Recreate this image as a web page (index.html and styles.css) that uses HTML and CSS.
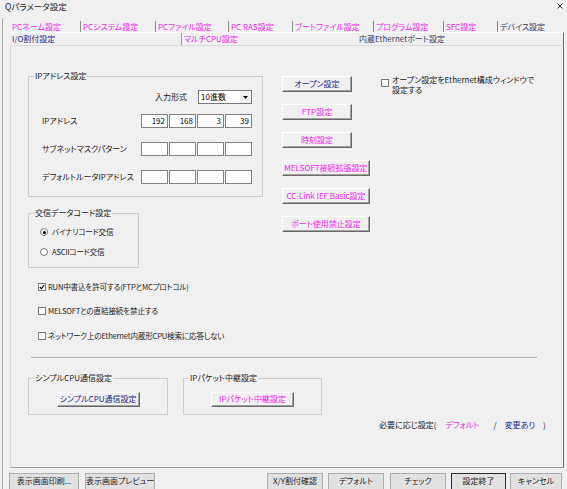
FILE: index.html
```
<!DOCTYPE html>
<html lang="ja">
<head>
<meta charset="utf-8">
<title>Qパラメータ設定</title>
<link rel="stylesheet" href="styles.css">
</head>
<body>
<div class="window">
  <div class="titlebar">
    <span class="title">Qパラメータ設定</span>
    <svg class="close" viewBox="0 0 6 6" width="6" height="6"><path d="M0.5 0.5L5.5 5.5M5.5 0.5L0.5 5.5" stroke="#222" stroke-width="0.9"/></svg>
  </div>
  <div class="frame">
    <div class="tabrow row1">
      <div class="tab tw1 mag">PCネーム設定</div>
      <div class="tab tw2 mag">PCシステム設定</div>
      <div class="tab tw3 mag">PCファイル設定</div>
      <div class="tab tw4 mag">PC RAS設定</div>
      <div class="tab tw5 mag">ブートファイル設定</div>
      <div class="tab tw6 mag">プログラム設定</div>
      <div class="tab tw7 mag">SFC設定</div>
      <div class="tab tw8 dark">デバイス設定</div>
    </div>
    <div class="tabrow row2">
      <div class="tab tr1 navy">I/O割付設定</div>
      <div class="tab tr2 mag">マルチCPU設定</div>
      <div class="tab tr3 dark">内蔵Ethernetポート設定</div>
    </div>
    <div class="panel">
      <div class="top">
        <div class="leftcol">
          <div class="group ip">
            <span class="legend">IPアドレス設定</span>
            <div class="fmt">
              <span class="fmt-label">入力形式</span>
              <div class="select">
                <span class="sel-text">10進数</span>
                <span class="sel-btn"><svg viewBox="0 0 5 3" width="5" height="3"><polygon points="0,0 5,0 2.5,3" fill="#000"/></svg></span>
              </div>
            </div>
            <div class="iprow">
              <span class="iplabel">IPアドレス</span>
              <div class="octets"><span class="oct">192</span><span class="oct">168</span><span class="oct">3</span><span class="oct">39</span></div>
            </div>
            <div class="iprow">
              <span class="iplabel">サブネットマスクパターン</span>
              <div class="octets"><span class="oct"></span><span class="oct"></span><span class="oct"></span><span class="oct"></span></div>
            </div>
            <div class="iprow">
              <span class="iplabel">デフォルトルータIPアドレス</span>
              <div class="octets"><span class="oct"></span><span class="oct"></span><span class="oct"></span><span class="oct"></span></div>
            </div>
          </div>
          <div class="group comm">
            <span class="legend">交信データコード設定</span>
            <div class="radio-row"><span class="radio on"></span><span class="narrow">バイナリコード交信</span></div>
            <div class="radio-row"><span class="radio"></span><span class="narrow">ASCIIコード交信</span></div>
          </div>
          <div class="checks">
            <div class="check-row r1"><span class="cb"><svg viewBox="0 0 6 6" width="6" height="6"><path d="M0.8 3L2.4 4.6L5.3 1.2" stroke="#000" stroke-width="1.1" fill="none"/></svg></span><span class="narrow">RUN中書込を許可する(FTPとMCプロトコル)</span></div>
            <div class="check-row r2"><span class="cb"></span><span class="narrow">MELSOFTとの直結接続を禁止する</span></div>
            <div class="check-row r3"><span class="cb"></span><span class="narrow">ネットワーク上のEthernet内蔵形CPU検索に応答しない</span></div>
          </div>
        </div>
        <div class="btncol">
          <div class="btn3d w70 navy">オープン設定</div>
          <div class="btn3d w70 mag">FTP設定</div>
          <div class="btn3d w70 mag">時刻設定</div>
          <div class="btn3d w88 mag">MELSOFT接続拡張設定</div>
          <div class="btn3d w88 mag">CC-Link IEF Basic設定</div>
          <div class="btn3d w88 mag">ポート使用禁止設定</div>
        </div>
        <div class="opencheck">
          <span class="cb"></span>
          <span class="opentext"><span class="ol">オープン設定をEthernet構成ウィンドウで</span><span class="ol">設定する</span></span>
        </div>
      </div>
      <div class="sep"></div>
      <div class="bottomgroups">
        <div class="group bg1">
          <span class="legend">シンプルCPU通信設定</span>
          <div class="btn3d w83 navy">シンプルCPU通信設定</div>
        </div>
        <div class="group bg2">
          <span class="legend">IPパケット中継設定</span>
          <div class="btn3d w83 mag">IPパケット中継設定</div>
        </div>
      </div>
      <div class="note">
        <span class="n1">必要に応じ設定(</span>
        <span class="n2 mag">デフォルト</span>
        <span class="n3">/</span>
        <span class="n4 navy">変更あり</span>
        <span class="n5">)</span>
      </div>
    </div>
    <div class="footer">
      <div class="fbtn fw70">表示画面印刷...</div>
      <div class="fbtn fw70 gapl6">表示画面プレビュー</div>
      <div class="fbtn fw56 xy">X/Y割付確認</div>
      <div class="fbtn fw56 gapl5">デフォルト</div>
      <div class="fbtn fw56 gapl6">チェック</div>
      <div class="fbtn fw55 gapl5 default">設定終了</div>
      <div class="fbtn fw52 gapl4">キャンセル</div>
    </div>
  </div>
</div>
</body>
</html>
```
FILE: styles.css
```
* { box-sizing: border-box; }
html, body { margin: 0; padding: 0; }
body {
  width: 567px;
  height: 489px;
  overflow: hidden;
  background: #f0f0f0;
  font-family: "Noto Sans CJK JP", "Noto Sans", sans-serif;
  font-size: 8px;
  line-height: 10px;
  color: #1a1a1a;
  font-feature-settings: "palt";
}
.mag { color: #f01cf0; }
.navy { color: #25258a; }
.dark { color: #3a3a58; }
.narrow { font-size: 7.6px; letter-spacing: -0.2px; }

.titlebar {
  display: flex;
  justify-content: space-between;
  align-items: flex-start;
  height: 18px;
  padding: 1px 4px 0 5px;
}
.title { font-size: 8.5px; line-height: 10px; color: #222; }
.close { margin-top: 2px; }

.frame {
  margin-left: 2px;
  border-left: 1px solid #a6a6a6;
  height: 471px;
}

.tabrow { display: flex; }
.row1 { height: 14px; padding: 3px 0 0 7px; }
.tab { white-space: nowrap; padding-left: 2px; }
.row1 .tab { height: 11px; line-height: 11px; }
.row1 .tab + .tab { border-left: 1px solid #8a8a8a; }
.tw1 { width: 70px; }
.tw2 { width: 75px; }
.tw3 { width: 73px; }
.tw4 { width: 64px; }
.tw5 { width: 81px; }
.tw6 { width: 70px; }
.tw7 { width: 54px; }
.tw8 { flex: 1; }

.row2 {
  height: 13px;
  margin-left: 7px;
  width: 554px;
  border-top: 1px solid #fdfdfd;
  border-right: 1px solid #6a6a6a;
}
.row2 .tab { height: 12px; line-height: 11px; }
.tr1 { width: 171px; }
.tr2 { width: 176px; border-left: 1px solid #9a9a9a; }
.tr3 { flex: 1; }

.panel {
  margin-left: 7px;
  width: 554px;
  height: 423px;
  border: 1px solid;
  border-color: #dcdcdc #6a6a6a #a0a0a0 #dcdcdc;
  padding: 30px 0 0 17px;
}

.top { display: flex; align-items: flex-start; }
.leftcol { width: 235px; display: flex; flex-direction: column; align-items: flex-start; }

.group { position: relative; border: 1px solid #cdcdcd; }
.legend {
  position: absolute;
  top: -6px;
  left: 5px;
  padding: 0 1px;
  background: #f0f0f0;
  line-height: 10px;
  white-space: nowrap;
}

.ip { width: 235px; height: 121px; }
.fmt {
  display: flex;
  justify-content: flex-end;
  align-items: center;
  height: 14px;
  margin-top: 13px;
  padding-right: 10px;
}
.fmt-label { margin-right: 11px; }
.select {
  width: 54px;
  height: 14px;
  background: #fff;
  border: 1px solid #7a7a7a;
  display: flex;
  justify-content: space-between;
  align-items: center;
  padding-left: 2px;
  color: #000;
}
.sel-btn {
  width: 11px;
  height: 12px;
  background: #f0f0f0;
  display: flex;
  align-items: center;
  justify-content: center;
}
.iprow {
  display: flex;
  align-items: center;
  height: 14px;
  margin-top: 10px;
  padding-left: 13px;
}
.iprow + .iprow { margin-top: 14px; }
.iplabel { width: 99px; white-space: nowrap; }
.octets { display: flex; gap: 1px; }
.oct {
  width: 27px;
  height: 14px;
  background: #fff;
  border: 1px solid #828282;
  text-align: right;
  padding-right: 2px;
  line-height: 12px;
  color: #000;
}

.comm { width: 111px; height: 55px; margin-top: 16px; padding: 13px 0 0 11px; }
.radio-row { display: flex; align-items: center; height: 10px; white-space: nowrap; }
.radio-row + .radio-row { margin-top: 10px; }
.radio {
  width: 8px;
  height: 8px;
  border-radius: 50%;
  border: 1px solid #7a7a7a;
  background: #fff;
  margin-right: 4px;
  display: flex;
  align-items: center;
  justify-content: center;
  flex: none;
}
.radio.on::after {
  content: "";
  width: 3px;
  height: 3px;
  border-radius: 50%;
  background: #000;
}

.checks { padding-left: 10px; margin-top: 14px; }
.check-row { display: flex; align-items: center; height: 10px; white-space: nowrap; }
.r2 { margin-top: 14px; }
.r3 { margin-top: 15px; }
.cb {
  width: 8px;
  height: 8px;
  border: 1px solid #7a7a7a;
  background: #fff;
  margin-right: 2px;
  flex: none;
  display: flex;
  align-items: center;
  justify-content: center;
}

.btncol { margin-left: 19px; display: flex; flex-direction: column; gap: 12px; }
.btn3d {
  height: 16px;
  border: 1px solid;
  border-color: #ffffff #696969 #696969 #ffffff;
  box-shadow: inset -1px -1px 0 #a0a0a0;
  background: #f0f0f0;
  text-align: center;
  line-height: 13px;
  white-space: nowrap;
}
.w70 { width: 70px; }
.w88 { width: 88px; }
.w83 { width: 83px; height: 15px; line-height: 12px; }

.opencheck { margin-left: 11px; margin-top: -1px; display: flex; align-items: flex-start; }
.opencheck .cb { margin-top: 4px; margin-right: 3px; }
.opentext { display: flex; flex-direction: column; white-space: nowrap; }
.ol { display: block; height: 10px; line-height: 10px; }

.sep {
  margin: 16px 0 0 3px;
  width: 506px;
  height: 2px;
  border-top: 1px solid #a8a8a8;
  border-bottom: 1px solid #ffffff;
}

.bottomgroups { display: flex; gap: 15px; margin-top: 19px; }
.bg1, .bg2 { height: 37px; padding-top: 13px; display: flex; justify-content: center; align-items: flex-start; }
.bg1 { width: 140px; }
.bg2 { width: 139px; }

.note { display: flex; margin-top: 5px; padding-left: 351px; white-space: nowrap; }
.n2 { margin-left: 9px; }
.n3 { margin-left: 14px; }
.n4 { margin-left: 8px; }
.n5 { margin-left: 8px; }

.footer { display: flex; padding: 5px 0 0 6px; }
.fbtn {
  height: 20px;
  background: #e1e1e1;
  border: 1px solid #adadad;
  text-align: center;
  padding-top: 2px;
  line-height: 10px;
  white-space: nowrap;
  color: #1a1a1a;
}
.fw70 { width: 70px; }
.fw56 { width: 56px; }
.fw55 { width: 55px; }
.fw52 { width: 52px; }
.gapl6 { margin-left: 6px; }
.gapl5 { margin-left: 5px; }
.gapl4 { margin-left: 4px; }
.xy { margin-left: 112px; }
.default { border-color: #2a2a2a; }
```
